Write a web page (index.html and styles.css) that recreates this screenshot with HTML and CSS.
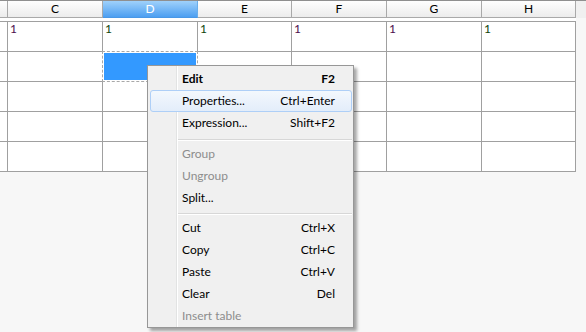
FILE: index.html
```html
<!DOCTYPE html>
<html>
<head>
<meta charset="utf-8">
<link rel="stylesheet" href="styles.css">
</head>
<body>
<div class="sheet">
  <div class="hdr">
    <div class="hc w8"></div>
    <div class="hc w95">C</div>
    <div class="hc w95 sel">D</div>
    <div class="hc w94">E</div>
    <div class="hc w95">F</div>
    <div class="hc w95">G</div>
    <div class="hc w94">H</div>
  </div>
  <div class="grid">
    <div class="rows">
      <div class="row">
        <div class="c"></div>
        <div class="c"><span class="v pu">1</span></div>
        <div class="c"><span class="v gr">1</span></div>
        <div class="c"><span class="v gr">1</span></div>
        <div class="c"><span class="v pu">1</span></div>
        <div class="c"><span class="v pu">1</span></div>
        <div class="c"><span class="v gr">1</span></div>
      </div>
      <div class="row">
        <div class="c"></div>
        <div class="c"></div>
        <div class="c"><div class="selbox"><div class="selfill"></div></div></div>
        <div class="c"></div>
        <div class="c"></div>
        <div class="c"></div>
        <div class="c"></div>
      </div>
      <div class="row">
        <div class="c"></div><div class="c"></div><div class="c"></div><div class="c"></div><div class="c"></div><div class="c"></div><div class="c"></div>
      </div>
      <div class="row">
        <div class="c"></div><div class="c"></div><div class="c"></div><div class="c"></div><div class="c"></div><div class="c"></div><div class="c"></div>
      </div>
      <div class="row">
        <div class="c"></div><div class="c"></div><div class="c"></div><div class="c"></div><div class="c"></div><div class="c"></div><div class="c"></div>
      </div>
    </div>
  </div>
</div>

<div class="menu">
  <div class="item bold"><span>Edit</span><span>F2</span></div>
  <div class="item hot"><span>Properties...</span><span>Ctrl+Enter</span></div>
  <div class="item"><span>Expression...</span><span>Shift+F2</span></div>
  <div class="sep sep1"></div>
  <div class="item dis"><span>Group</span></div>
  <div class="item dis"><span>Ungroup</span></div>
  <div class="item"><span>Split...</span></div>
  <div class="sep sep2"></div>
  <div class="item"><span>Cut</span><span>Ctrl+X</span></div>
  <div class="item"><span>Copy</span><span>Ctrl+C</span></div>
  <div class="item"><span>Paste</span><span>Ctrl+V</span></div>
  <div class="item"><span>Clear</span><span>Del</span></div>
  <div class="item dis"><span>Insert table</span></div>
</div>
</body>
</html>
```
FILE: styles.css
```css
html, body {
  margin: 0;
  padding: 0;
}
body {
  width: 586px;
  height: 332px;
  overflow: hidden;
  position: relative;
  background: #f7f7f7;
  font-family: Lato, "Open Sans", sans-serif;
  font-size: 12px;
  color: #000;
}
.hdr {
  display: flex;
  border-top: 1px solid #8f8f8f;
  background: #f0f0f0;
  height: 17px;
}
.hc {
  box-sizing: border-box;
  height: 17px;
  border-right: 1px solid #a9a9a9;
  border-bottom: 1px solid #a9a9a9;
  background: linear-gradient(#fefefe, #ececec);
  text-align: center;
  line-height: 16px;
  color: #000;
}
.hc.sel {
  background: linear-gradient(#9fd1fb, #4d9ff1);
  color: #fff;
  border-right-color: #6aaeea;
  border-bottom-color: #4a98e6;
}
.w8 { width: 8px; }
.w95 { width: 95px; }
.w94 { width: 94px; }
.grid {
  width: 576px;
  background: #fff;
  padding-top: 3px;
}
.rows {
  border-top: 1px solid #a0a0a0;
}
.row {
  display: grid;
  grid-template-columns: 8px 95px 95px 94px 95px 95px 94px;
  height: 30px;
}
.c {
  box-sizing: border-box;
  border-right: 1px solid #a0a0a0;
  border-bottom: 1px solid #a0a0a0;
  position: relative;
  padding-left: 2px;
  line-height: 13px;
}
.v.pu { color: #4e0f4e; }
.v.gr { color: #0f440a; }
.selbox {
  position: absolute;
  left: -1px;
  top: -1px;
  width: 96px;
  height: 31px;
  box-sizing: border-box;
  border: 1px dashed #a8a8a8;
  background: #fff;
  padding: 1px;
}
.selfill {
  width: 100%;
  height: 100%;
  background: #3399ff;
}
.menu {
  position: absolute;
  left: 147px;
  top: 65px;
  width: 207px;
  box-sizing: border-box;
  border: 1px solid #979797;
  background: #f0f0f0;
  padding: 2px 0 0 0;
  box-shadow: 3px 3px 3px rgba(0, 0, 0, 0.35);
}
.menu::before {
  content: "";
  position: absolute;
  left: 28px;
  top: 0;
  bottom: 0;
  width: 1px;
  background: #e2e3e3;
  box-shadow: 1px 0 0 #ffffff;
}
.item {
  position: relative;
  display: flex;
  justify-content: space-between;
  height: 22px;
  box-sizing: border-box;
  margin: 0 1px 0 2px;
  padding: 0 16px 0 31px;
  border: 1px solid transparent;
  border-radius: 3px;
  line-height: 20px;
  color: #000;
}
.item.bold { font-weight: bold; }
.item.dis { color: #8d8d8d; }
.item.hot {
  border-color: #aecff7;
  background: linear-gradient(#f3f8fd, #e3edfa);
}
.sep {
  position: relative;
  margin-left: 30px;
  margin-right: 1px;
}
.sep1 { height: 9px; }
.sep2 { height: 8px; }
.sep::after {
  content: "";
  position: absolute;
  left: 0;
  right: 0;
  top: 5px;
  height: 1px;
  background: #d7d7d7;
  box-shadow: 0 1px 0 #ffffff;
}
.sep2::after { top: 4px; }
```
